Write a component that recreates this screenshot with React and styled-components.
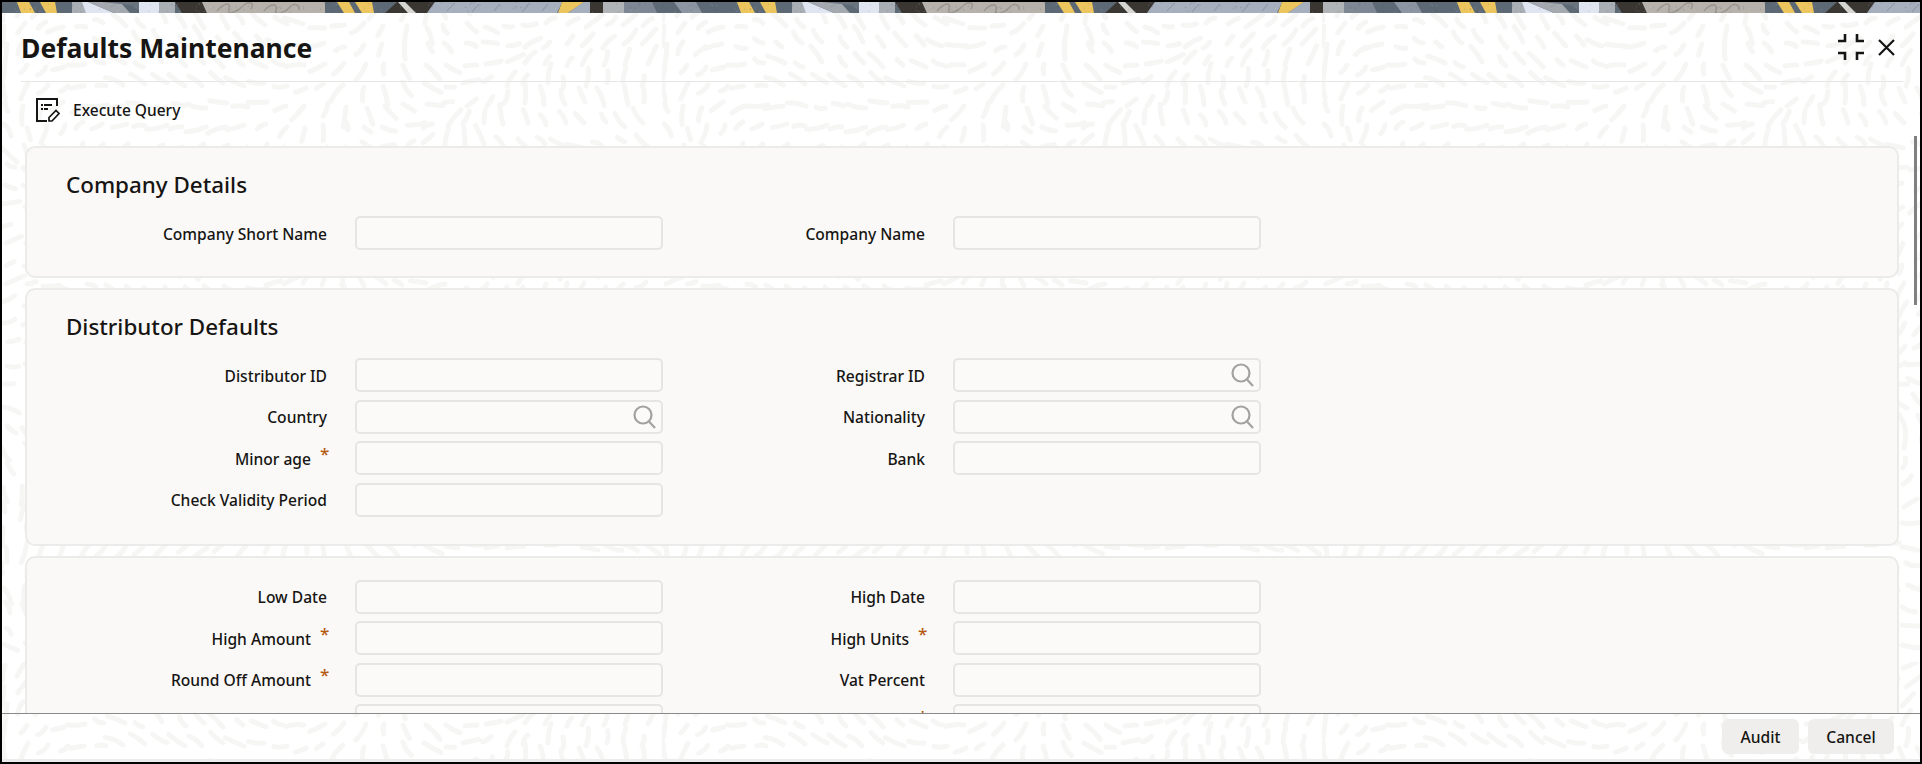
import React from 'react';
import styled, { createGlobalStyle } from 'styled-components';

// seeded random so the texture comes out the same on every load
const seeded = (seed) => () => {
  seed = (seed + 0x6d2b79f5) | 0;
  let t = Math.imul(seed ^ (seed >>> 15), 1 | seed);
  t = (t + Math.imul(t ^ (t >>> 7), 61 | t)) ^ t;
  return ((t ^ (t >>> 14)) >>> 0) / 4294967296;
};

const buildTexture = () => {
  const rand = seeded(11);
  const size = 660;
  const step = 20;
  let d = '';
  for (let y = 0; y < size; y += step) {
    for (let x = 0; x < size; x += step) {
      const px = x + rand() * 6;
      const py = y + rand() * 6;
      const a = 1.8 * Math.sin(px / 120) + 1.6 * Math.cos(py / 90) + Math.sin((px + py) / 170) + (rand() - 0.5) * 0.3;
      const len = 8 + rand() * 13;
      const dx = Math.cos(a) * len;
      const dy = Math.sin(a) * len;
      const bend = (rand() - 0.5) * 5;
      d += `M${px.toFixed(0)} ${py.toFixed(0)}q${(dx / 2 - dy / len * bend).toFixed(1)} ${(dy / 2 + dx / len * bend).toFixed(1)} ${dx.toFixed(1)} ${dy.toFixed(1)}`;
    }
  }
  const svg = `<svg xmlns="http://www.w3.org/2000/svg" width="${size}" height="${size}"><path d="${d}" fill="none" stroke="#f6f6f5" stroke-width="5" stroke-linecap="round"/></svg>`;
  return `data:image/svg+xml,${encodeURIComponent(svg)}`;
};

const TEXTURE = buildTexture();

const GlobalStyle = createGlobalStyle`
  html, body {
    margin: 0;
    padding: 0;
    background: #fff;
  }
  * {
    box-sizing: border-box;
  }
`;

const Window = styled.div`
  position: relative;
  display: flex;
  flex-direction: column;
  width: 1922px;
  height: 764px;
  overflow: hidden;
  border: 2px solid #000;
  background: #fff url("${TEXTURE}");
  font-family: "Noto Sans", "Open Sans", sans-serif;
  color: #161513;
`;

const StripSvg = styled.svg`
  display: block;
  flex: none;
  width: 100%;
  height: 11px;
`;

const Header = styled.header`
  flex: none;
  display: flex;
  align-items: center;
  justify-content: space-between;
  height: 69px;
  margin: 0 17px 0 19px;
  border-bottom: 1px solid #e6e6e6;
`;

const Title = styled.h1`
  margin: 2px 0 0;
  font-size: 26.5px;
  line-height: 36px;
  font-weight: 700;
`;

const WindowIcons = styled.div`
  display: flex;
  align-items: center;
  gap: 14px;
  padding-right: 8px;
`;

const Toolbar = styled.div`
  flex: none;
  display: flex;
  align-items: center;
  gap: 13px;
  height: 47px;
  padding: 8px 0 0 34px;
  font-size: 15.5px;
  font-weight: 500;
`;

const Body = styled.main`
  position: relative;
  flex: 1;
  min-height: 0;
  overflow: hidden;
  display: flex;
  flex-direction: column;
  gap: 10px;
  padding: 17px 21px 0 23px;
`;

const ScrollThumb = styled.div`
  position: absolute;
  top: 7px;
  right: 3px;
  width: 3px;
  height: 169px;
  background: #808080;
`;

const Panel = styled.section`
  flex: none;
  padding: 22px 0 ${(p) => p.$bottom || 26}px 33px;
  background: #faf9f7;
  border: 2px solid #ebebe9;
  border-radius: 10px;
`;

const PanelTitle = styled.h2`
  margin: 0 0 16px 6px;
  font-size: 22.4px;
  line-height: 30px;
  font-weight: 500;
`;

const Fields = styled.div`
  display: grid;
  grid-template-columns: 267px 308px 234px 308px;
  grid-auto-rows: 34px;
  column-gap: 28px;
  row-gap: 7.5px;
`;

const Label = styled.label`
  display: flex;
  align-items: center;
  justify-content: flex-end;
  gap: 9px;
  padding-top: 1px;
  font-size: 15.6px;
  font-weight: 500;
  white-space: nowrap;
`;

const Star = styled.span`
  width: 7px;
  margin-top: -10px;
  color: #b55a14;
  font-size: 17px;
  line-height: 20px;
`;

const InputBox = styled.div`
  position: relative;
  background: #fbfaf8;
  border: 2px solid #e6e5e3;
  border-radius: 5px;
`;

const SearchIcon = styled.svg`
  position: absolute;
  top: 3px;
  right: 5px;
`;

const Footer = styled.footer`
  flex: none;
  display: flex;
  justify-content: flex-end;
  gap: 9px;
  height: 49px;
  padding: 5px 26px 0 0;
  border-top: 1px solid #8a8a8a;
  border-bottom: 3px solid #ececec;
`;

const Button = styled.button`
  width: ${(p) => p.$width}px;
  height: 35px;
  padding: 0;
  border: none;
  border-radius: 6px;
  background: #efeeec;
  color: #161513;
  font-family: inherit;
  font-size: 15.6px;
  font-weight: 500;
`;

const TopStrip = () => {
  const rand = seeded(5);
  const specks = Array.from({ length: 170 }, () => ({
    x: rand() * 720,
    y: rand() * 11,
    dark: rand() > 0.5,
  }));
  const shapes = [
    ['#5d6a76', '0,0 720,0 720,11 0,11'],
    ['#edc55f', '15,0 27,0 33,11 19,11'],
    ['#edc55f', '38,0 53,0 55,11 44,11'],
    ['#a9afb5', '70,0 88,0 92,11 70,11'],
    ['#dfe6f2', '80,0 86,0 112,11 84,11'],
    ['#a3a9af', '86,0 118,0 128,11 112,11'],
    ['#6b7580', '100,0 137,0 137,8 128,3'],
    ['#dfe6f2', '137,0 157,0 157,11 137,11'],
    ['#a9afb5', '157,0 173,0 173,11 157,11'],
    ['#3a3733', '173,0 200,0 205,11 180,11'],
    ['#b6b1aa', '200,0 323,0 323,11 205,11'],
    ['#edc55f', '335,0 347,0 353,11 342,11'],
    ['#edc55f', '353,0 370,0 372,11 360,11'],
    ['#3a3733', '383,11 395,0 433,0 425,11'],
    ['#d5d5d2', '396,0 403,0 414,11 406,11'],
    ['#a5afbd', '433,0 560,0 555,11 425,11'],
    ['#edc55f', '560,0 582,0 566,11 556,11'],
    ['#a5afbd', '582,0 590,0 590,11 566,11'],
    ['#3a3733', '588,0 601,0 601,11 588,11'],
    ['#b1b4b6', '601,0 622,0 622,11 601,11'],
    ['#8b96a2', '672,0 694,0 700,11 680,11'],
    ['#7d8894', '622,0 650,0 655,11 622,11'],
  ];
  return (
    <StripSvg viewBox="0 0 1918 11" preserveAspectRatio="none" aria-hidden="true">
      <defs>
        <pattern id="strip" patternUnits="userSpaceOnUse" width="720" height="11">
          {shapes.map(([fill, points]) => (
            <polygon key={points} fill={fill} points={points} />
          ))}
          <path
            d="M215 9c8-9 14-9 12-2s8 3 14-3 12-3 8 3M262 9c7-8 14-8 12-1s10 2 14-3 10-2 9 3"
            fill="none"
            stroke="#9b9690"
            strokeWidth="1.6"
          />
          <path d="M445 9l8-8M470 10l7-8M492 9l6-7M520 10l8-9M540 9l6-7" stroke="#7f8a98" strokeWidth="0.8" />
          {specks.map((s) => (
            <rect key={s.x} x={s.x} y={s.y} width="1" height="1" fill={s.dark ? '#000' : '#fff'} opacity="0.16" />
          ))}
        </pattern>
      </defs>
      <rect width="1918" height="11" fill="url(#strip)" />
    </StripSvg>
  );
};

const CollapseIcon = () => (
  <svg width="26" height="26" viewBox="0 0 26 26" fill="none" stroke="#161513" strokeWidth="2.6" aria-hidden="true">
    <path d="M0 7h7V0M19 0v7h7M0 19h7v7M19 26v-7h7" />
  </svg>
);

const CloseIcon = () => (
  <svg width="17" height="17" viewBox="0 0 17 17" fill="none" stroke="#161513" strokeWidth="2.2" aria-hidden="true">
    <path d="M1 1l15 15M16 1L1 16" />
  </svg>
);

const QueryIcon = () => (
  <svg width="24" height="26" viewBox="0 0 24 26" fill="none" stroke="#161513" strokeWidth="2" aria-hidden="true">
    <path d="M21 9V2H1v22h10" />
    <path d="M5 8h2M8 8h8M5 12h2M8 12h4" />
    <path d="M13 24v-3.5L20 13.500l3 3L16 24z" strokeWidth="1.7" />
  </svg>
);

const Search = () => (
  <SearchIcon width="23" height="24" viewBox="0 0 23 24" fill="none" stroke="#a2a2a0" strokeWidth="2.2" aria-hidden="true">
    <circle cx="10" cy="10" r="8.500" />
    <path d="M16 16.500l6 6.500" />
  </SearchIcon>
);

const Field = ({ label, required, search }) => (
  <>
    <Label>
      {label}
      {required && <Star>*</Star>}
    </Label>
    <InputBox>{search && <Search />}</InputBox>
  </>
);

const App = () => {
  return (
    <Window>
      <GlobalStyle />
      <TopStrip />
      <Header>
        <Title>Defaults Maintenance</Title>
        <WindowIcons>
          <CollapseIcon />
          <CloseIcon />
        </WindowIcons>
      </Header>
      <Toolbar>
        <QueryIcon />
        Execute Query
      </Toolbar>
      <Body>
        <Panel>
          <PanelTitle>Company Details</PanelTitle>
          <Fields>
            <Field label="Company Short Name" />
            <Field label="Company Name" />
          </Fields>
        </Panel>
        <Panel $bottom={27}>
          <PanelTitle>Distributor Defaults</PanelTitle>
          <Fields>
            <Field label="Distributor ID" />
            <Field label="Registrar ID" search />
            <Field label="Country" search />
            <Field label="Nationality" search />
            <Field label="Minor age" required />
            <Field label="Bank" />
            <Field label="Check Validity Period" />
          </Fields>
        </Panel>
        <Panel>
          <Fields>
            <Field label="Low Date" />
            <Field label="High Date" />
            <Field label="High Amount" required />
            <Field label="High Units" required />
            <Field label="Round Off Amount" required />
            <Field label="Vat Percent" />
            <Field label="" />
            <Field label="" required />
          </Fields>
        </Panel>
        <ScrollThumb />
      </Body>
      <Footer>
        <Button $width={77}>Audit</Button>
        <Button $width={86}>Cancel</Button>
      </Footer>
    </Window>
  );
};

export default App;
